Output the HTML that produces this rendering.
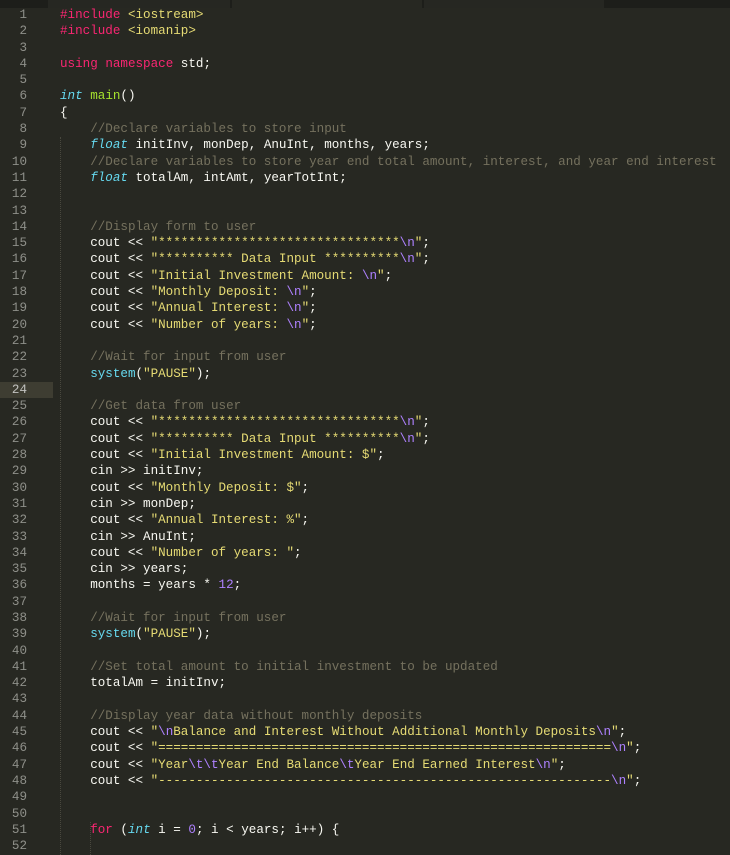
<!DOCTYPE html>
<html><head><style>
html,body{margin:0;padding:0;background:#272822;width:730px;height:855px;overflow:hidden}
#top{position:absolute;left:0;top:0;width:730px;height:8px;background:#1d1e1a}
.tab{position:absolute;top:0;height:8px;background:#262722}
#code{position:absolute;left:0;top:7px;font-family:"Liberation Mono",monospace;font-size:12.58px;line-height:16.3px;color:#f8f8f2;white-space:pre}
.l{height:16.3px;position:relative}
.n{display:inline-block;width:27px;text-align:right;color:#8f908a;margin-right:33px;position:relative}
.hl{position:absolute;left:0;top:0;width:53px;height:16.3px;background:#3e3d32}
.hl+.n{color:#c2c2bf}
.k{color:#f92672}.s{color:#e6db74}.c{color:#75715e}.p{color:#ae81ff}.t{color:#66d9ef;font-style:italic}.f{color:#a6e22e}.b{color:#66d9ef}
.g{position:absolute;top:0;width:0;border-left:1px dotted #49483e}
</style></head><body>
<div id="top"><div class="tab" style="left:48px;width:182px"></div><div class="tab" style="left:232px;width:190px;background:#272822"></div><div class="tab" style="left:424px;width:180px"></div></div>
<div id="code"><div class="l"><span class="n">1</span><span class="k">#include</span> <span class="s">&lt;iostream&gt;</span></div><div class="l"><span class="n">2</span><span class="k">#include</span> <span class="s">&lt;iomanip&gt;</span></div><div class="l"><span class="n">3</span></div><div class="l"><span class="n">4</span><span class="k">using</span> <span class="k">namespace</span> std;</div><div class="l"><span class="n">5</span></div><div class="l"><span class="n">6</span><span class="t">int</span> <span class="f">main</span>()</div><div class="l"><span class="n">7</span>{</div><div class="l"><span class="n">8</span>    <span class="c">//Declare variables to store input</span></div><div class="l"><span class="n">9</span>    <span class="t">float</span> initInv, monDep, AnuInt, months, years;</div><div class="l"><span class="n">10</span>    <span class="c">//Declare variables to store year end total amount, interest, and year end interest</span></div><div class="l"><span class="n">11</span>    <span class="t">float</span> totalAm, intAmt, yearTotInt;</div><div class="l"><span class="n">12</span></div><div class="l"><span class="n">13</span></div><div class="l"><span class="n">14</span>    <span class="c">//Display form to user</span></div><div class="l"><span class="n">15</span>    cout &lt;&lt; <span class="s">"********************************<span class="p">\n</span>"</span>;</div><div class="l"><span class="n">16</span>    cout &lt;&lt; <span class="s">"********** Data Input **********<span class="p">\n</span>"</span>;</div><div class="l"><span class="n">17</span>    cout &lt;&lt; <span class="s">"Initial Investment Amount: <span class="p">\n</span>"</span>;</div><div class="l"><span class="n">18</span>    cout &lt;&lt; <span class="s">"Monthly Deposit: <span class="p">\n</span>"</span>;</div><div class="l"><span class="n">19</span>    cout &lt;&lt; <span class="s">"Annual Interest: <span class="p">\n</span>"</span>;</div><div class="l"><span class="n">20</span>    cout &lt;&lt; <span class="s">"Number of years: <span class="p">\n</span>"</span>;</div><div class="l"><span class="n">21</span></div><div class="l"><span class="n">22</span>    <span class="c">//Wait for input from user</span></div><div class="l"><span class="n">23</span>    <span class="b">system</span>(<span class="s">"PAUSE"</span>);</div><div class="l"><div class="hl"></div><span class="n">24</span></div><div class="l"><span class="n">25</span>    <span class="c">//Get data from user</span></div><div class="l"><span class="n">26</span>    cout &lt;&lt; <span class="s">"********************************<span class="p">\n</span>"</span>;</div><div class="l"><span class="n">27</span>    cout &lt;&lt; <span class="s">"********** Data Input **********<span class="p">\n</span>"</span>;</div><div class="l"><span class="n">28</span>    cout &lt;&lt; <span class="s">"Initial Investment Amount: $"</span>;</div><div class="l"><span class="n">29</span>    cin &gt;&gt; initInv;</div><div class="l"><span class="n">30</span>    cout &lt;&lt; <span class="s">"Monthly Deposit: $"</span>;</div><div class="l"><span class="n">31</span>    cin &gt;&gt; monDep;</div><div class="l"><span class="n">32</span>    cout &lt;&lt; <span class="s">"Annual Interest: %"</span>;</div><div class="l"><span class="n">33</span>    cin &gt;&gt; AnuInt;</div><div class="l"><span class="n">34</span>    cout &lt;&lt; <span class="s">"Number of years: "</span>;</div><div class="l"><span class="n">35</span>    cin &gt;&gt; years;</div><div class="l"><span class="n">36</span>    months = years * <span class="p">12</span>;</div><div class="l"><span class="n">37</span></div><div class="l"><span class="n">38</span>    <span class="c">//Wait for input from user</span></div><div class="l"><span class="n">39</span>    <span class="b">system</span>(<span class="s">"PAUSE"</span>);</div><div class="l"><span class="n">40</span></div><div class="l"><span class="n">41</span>    <span class="c">//Set total amount to initial investment to be updated</span></div><div class="l"><span class="n">42</span>    totalAm = initInv;</div><div class="l"><span class="n">43</span></div><div class="l"><span class="n">44</span>    <span class="c">//Display year data without monthly deposits</span></div><div class="l"><span class="n">45</span>    cout &lt;&lt; <span class="s">"<span class="p">\n</span>Balance and Interest Without Additional Monthly Deposits<span class="p">\n</span>"</span>;</div><div class="l"><span class="n">46</span>    cout &lt;&lt; <span class="s">"============================================================<span class="p">\n</span>"</span>;</div><div class="l"><span class="n">47</span>    cout &lt;&lt; <span class="s">"Year<span class="p">\t\t</span>Year End Balance<span class="p">\t</span>Year End Earned Interest<span class="p">\n</span>"</span>;</div><div class="l"><span class="n">48</span>    cout &lt;&lt; <span class="s">"------------------------------------------------------------<span class="p">\n</span>"</span>;</div><div class="l"><span class="n">49</span></div><div class="l"><span class="n">50</span></div><div class="l"><span class="n">51</span>    <span class="k">for</span> (<span class="t">int</span> i = <span class="p">0</span>; i &lt; years; i++) {</div><div class="l"><span class="n">52</span></div></div>
<div class="g" style="left:60px;top:137px;height:718px"></div>
<div class="g" style="left:90px;top:822px;height:33px"></div>
</body></html>
